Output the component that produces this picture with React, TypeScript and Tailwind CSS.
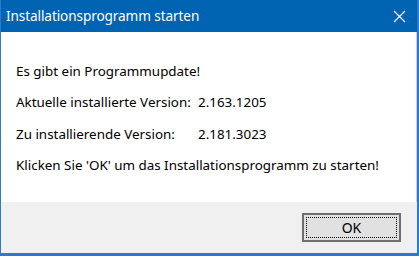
import React from "react";

const App = () => {
  const lines = [
    { label: "Es gibt ein Programmupdate!" },
    { label: "Aktuelle installierte Version:", value: "2.163.1205" },
    { label: "Zu installierende Version:", value: "2.181.3023" },
    { label: "Klicken Sie 'OK' um das Installationsprogramm zu starten!" },
  ];

  return (
    <div className="w-[419px] h-[256px] overflow-hidden bg-white font-['Noto_Sans',sans-serif]">
      <div className="flex flex-col w-full h-full border-l-[1.5px] border-r-[2px] border-b-[3px] border-[#2a7bd0]">
        {/* title bar */}
        <div className="flex items-center justify-between h-[32px] shrink-0 bg-[#0063b1] pl-[5px] pr-[11px]">
          <span className="text-white text-[13.6px] tracking-[-0.1px]">
            Installationsprogramm starten
          </span>
          <svg width="13" height="13" viewBox="0 0 13 13" className="text-white">
            <path d="M1 1 L12 12 M12 1 L1 12" stroke="currentColor" strokeWidth="1.2" />
          </svg>
        </div>

        {/* body */}
        <div className="flex flex-col flex-1 pt-[23px] pl-[15px] border-r border-[#cfcfcf] text-black text-[13.4px]">
          {lines.map((line, i) => (
            <div key={i} className="flex items-center h-[31.5px] whitespace-nowrap">
              {line.value ? (
                <>
                  <span className="w-[182px]">{line.label}</span>
                  <span>{line.value}</span>
                </>
              ) : (
                <span>{line.label}</span>
              )}
            </div>
          ))}
        </div>

        {/* footer */}
        <div className="flex items-center justify-end h-[51px] shrink-0 bg-[#f0f0f0] pr-[16px]">
          <button className="w-[99px] h-[29px] border-2 border-[#6e6e6e] bg-[#e1e1e1] p-[2px] text-[14px] text-black">
            <div className="flex items-center justify-center w-full h-full border border-dotted border-black">
              OK
            </div>
          </button>
        </div>
      </div>
    </div>
  );
};

export default App;
